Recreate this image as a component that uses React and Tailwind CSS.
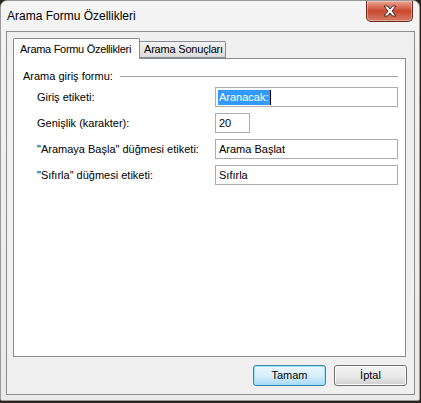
import React from "react";

const FONT = { fontFamily: '"Liberation Sans", Arial, sans-serif' };

function CloseButton() {
  return (
    <div className="absolute top-0 right-[6px] w-[47px] h-[21px] rounded-b-[5px] border border-t-0 border-[#6b2b22] bg-gradient-to-b from-[#e9a393] via-[#c9472f] to-[#d67a63] flex items-center justify-center shadow-[inset_0_0_0_1px_rgba(255,255,255,0.35)]">
      <svg width="16" height="12" viewBox="0 0 16 12">
        <path
          d="M2 1 L5.5 1 L8 4 L10.5 1 L14 1 L10 6 L14 11 L10.5 11 L8 8 L5.5 11 L2 11 L6 6 Z"
          fill="#fff"
          stroke="#4a2a26"
          strokeWidth="1"
          strokeLinejoin="round"
        />
      </svg>
    </div>
  );
}

function Field({ label, children }) {
  return (
    <>
      <div className="h-[20px] flex items-center text-[11px] text-black whitespace-nowrap">{label}</div>
      <div className="h-[20px]">{children}</div>
    </>
  );
}

function TextBox({ value, width = "w-[183px]", selected }) {
  return (
    <div className={`${width} h-[20px] border border-[#abadb3] bg-white flex items-center pl-[2px] text-[11px] text-black whitespace-nowrap`}>
      {selected ? (
        <>
          <span className="bg-[#3399ff] text-white px-[1px] leading-[15px]">{value}</span>
          <span className="w-[1px] h-[15px] bg-black" />
        </>
      ) : (
        <span className="pl-[1px]">{value}</span>
      )}
    </div>
  );
}

export default function App() {
  return (
    <div className="w-[421px] h-[403px] bg-[#2b2520] overflow-hidden" style={FONT}>
      <div className="relative w-[420px] h-[401px] rounded-t-[7px] rounded-b-[2px] bg-gradient-to-b from-[#f4f4f4] to-[#e9e9e9] border border-[#9a9a9a] flex flex-col">
        <div className="h-[30px] flex items-center pl-[6px] text-[12px] text-black">Arama Formu Özellikleri</div>
        <CloseButton />

        <div className="ml-[5px] w-[409px] h-[364px] border border-[#8d8d8d] bg-[#f0f0f0] flex flex-col pl-[6px] pt-[7px]">
          <div className="flex items-end h-[20px] relative z-10">
            <div className="w-[127px] h-[21px] bg-white border border-b-0 border-[#898c95] rounded-t-[2px] flex items-center pl-[6px] text-[11px] tracking-[-0.3px] text-black whitespace-nowrap">
              Arama Formu Özellikleri
            </div>
            <div className="w-[86px] h-[17px] mb-[1px] bg-gradient-to-b from-[#f3f3f3] to-[#dcdcdc] border border-l-0 border-[#898c95] rounded-tr-[2px] flex items-center pl-[4px] text-[11px] tracking-[-0.2px] text-black whitespace-nowrap">
              Arama Sonuçları
            </div>
          </div>

          <div className="w-[393px] h-[299px] -mt-[1px] bg-white border border-[#898c95] pt-[10px] pl-[9px]">
            <div className="flex items-center h-[14px] text-[11px] text-black">
              <span>Arama giriş formu:</span>
              <div className="ml-[7px] w-[278px] h-[1px] bg-[#a0a0a0]" />
            </div>

            <div className="mt-[4px] ml-[14px] grid grid-cols-[178px_183px] gap-y-[6px]">
              <Field label="Giriş etiketi:">
                <TextBox value="Aranacak:" selected />
              </Field>
              <Field label="Genişlik (karakter):">
                <TextBox value="20" width="w-[35px]" />
              </Field>
              <Field label={'"Aramaya Başla" düğmesi etiketi:'}>
                <TextBox value="Arama Başlat" />
              </Field>
              <Field label={'"Sıfırla" düğmesi etiketi:'}>
                <TextBox value="Sıfırla" />
              </Field>
            </div>
          </div>

          <div className="mt-[8px] flex justify-end gap-[8px] pr-[7px]">
            <div className="w-[73px] h-[21px] rounded-[3px] border border-[#3c7fb1] bg-gradient-to-b from-[#eaf6fd] via-[#d9f0fc] to-[#a7d9f5] shadow-[inset_0_0_0_1px_#9ee2f7] flex items-center justify-center text-[11px] text-black">
              Tamam
            </div>
            <div className="w-[73px] h-[21px] rounded-[3px] border border-[#707070] bg-gradient-to-b from-[#f2f2f2] via-[#ebebeb] to-[#cfcfcf] shadow-[inset_0_0_0_1px_#fcfcfc] flex items-center justify-center text-[11px] text-black">
              İptal
            </div>
          </div>
        </div>
      </div>
    </div>
  );
}
